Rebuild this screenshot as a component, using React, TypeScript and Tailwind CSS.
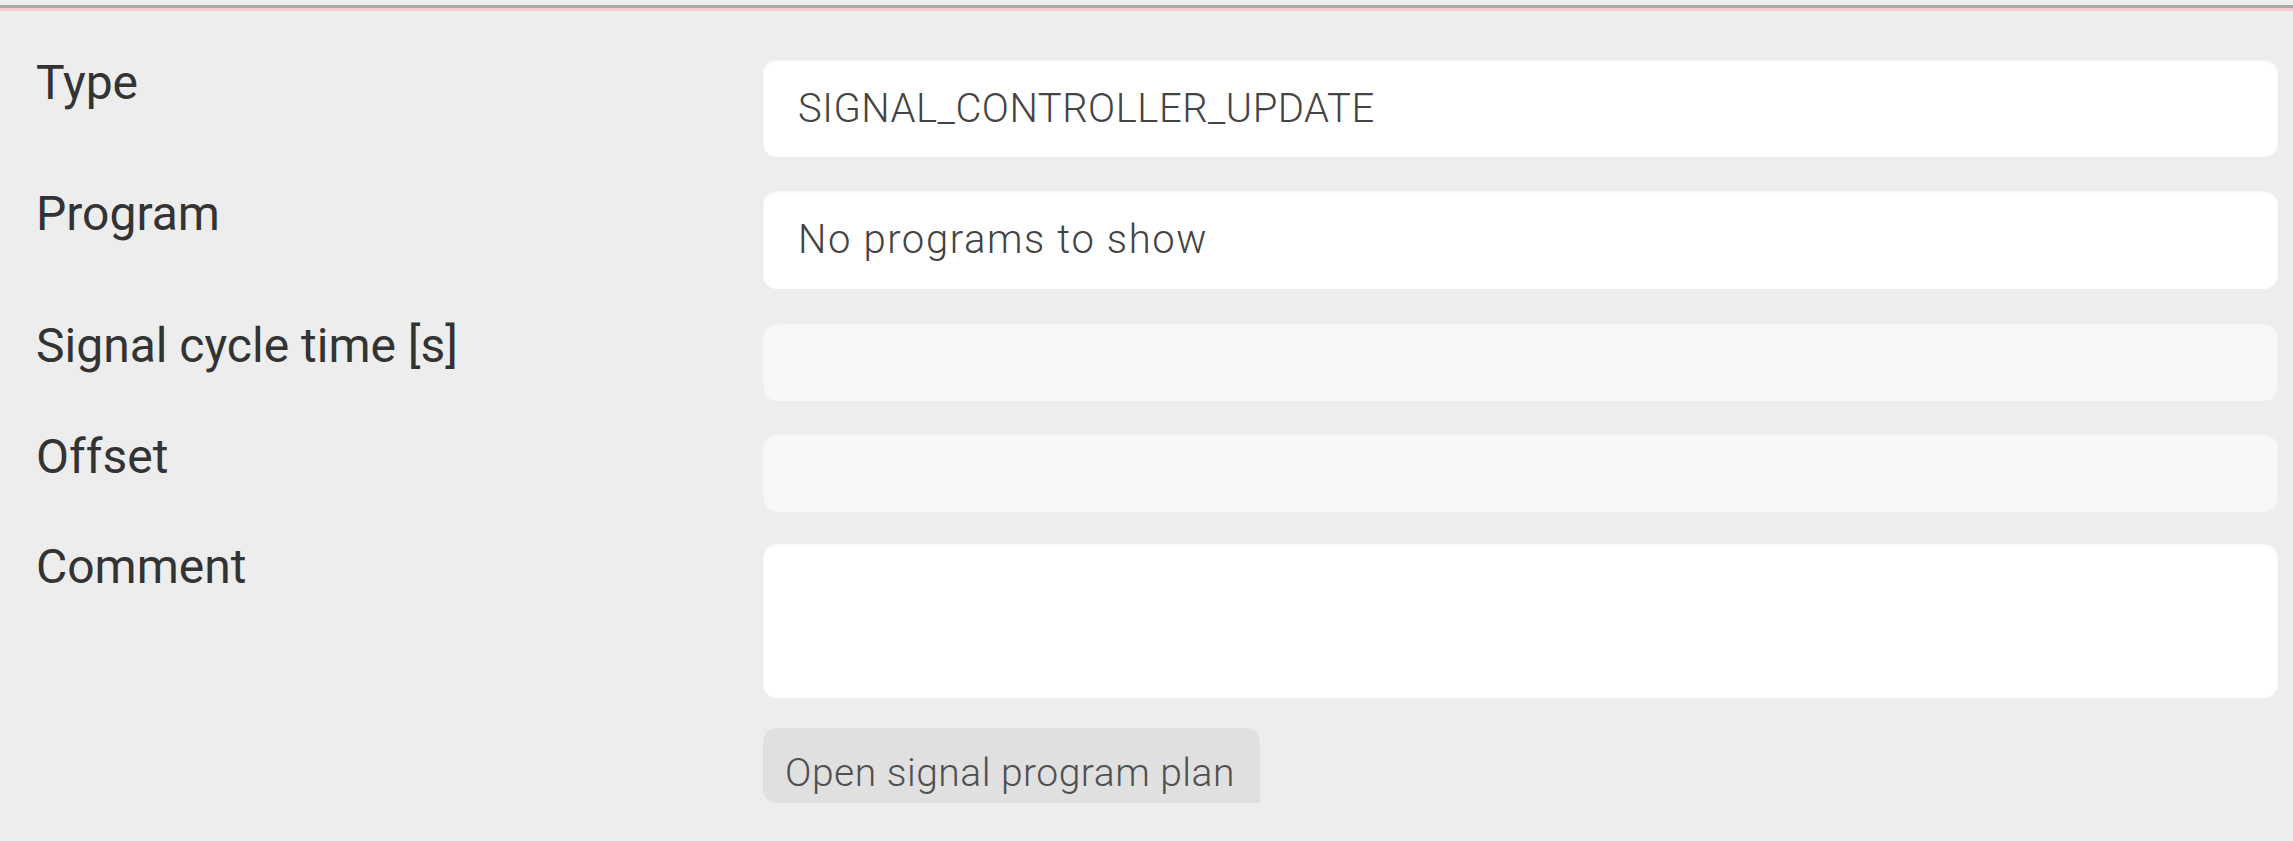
import React from 'react';

const labelCls = 'w-[727px] shrink-0 text-[48px] leading-[46px] text-[#333333]';
const boxCls = 'flex-1 rounded-[14px] shadow-[inset_0_1px_3px_rgba(0,0,0,0.05)]';

export default function App() {
  return (
    <div
      className="min-h-screen bg-[#ededed]"
      style={{ fontFamily: 'Roboto, "Noto Sans", sans-serif' }}
    >
      {/* header border */}
      <div className="h-[5px]" />
      <div className="h-[3px] bg-[#aba9a6]" />
      <div className="h-[3px] bg-[#f2ccd2]" />

      <div className="pl-[36px] pr-[15px] pt-[49px] pb-[38px] flex flex-col">
        {/* Type */}
        <div className="flex h-[97px]">
          <div className={labelCls}>Type</div>
          <div className={`${boxCls} bg-white flex items-center px-[35px] text-[40px] font-light tracking-[0.5px] text-[#444444]`}>
            SIGNAL_CONTROLLER_UPDATE
          </div>
        </div>

        {/* Program */}
        <div className="flex h-[98px] mt-[34px]">
          <div className={labelCls}>Program</div>
          <div className={`${boxCls} bg-white flex items-center px-[35px] text-[40px] font-light tracking-[1.6px] text-[#444444]`}>
            No programs to show
          </div>
        </div>

        {/* Signal cycle time */}
        <div className="flex h-[78px] mt-[34px]">
          <div className={labelCls}>Signal cycle time [s]</div>
          <div className={`${boxCls} bg-[#f8f8f8]`} />
        </div>

        {/* Offset */}
        <div className="flex h-[78px] mt-[33px]">
          <div className={labelCls}>Offset</div>
          <div className={`${boxCls} bg-[#f8f8f8]`} />
        </div>

        {/* Comment */}
        <div className="flex h-[154px] mt-[32px]">
          <div className={labelCls}>Comment</div>
          <div className={`${boxCls} bg-white`} />
        </div>

        <div className="flex mt-[30px]">
          <div className="w-[727px] shrink-0" />
          <button className="w-[497px] h-[75px] rounded-[14px] rounded-br-none bg-[#e0e0e0] text-left pl-[22px] pt-[14px] self-start text-[39px] leading-[46px] font-light tracking-[0.5px] text-[#505050]">
            <span className="block">Open signal program plan</span>
          </button>
        </div>
      </div>
    </div>
  );
}
